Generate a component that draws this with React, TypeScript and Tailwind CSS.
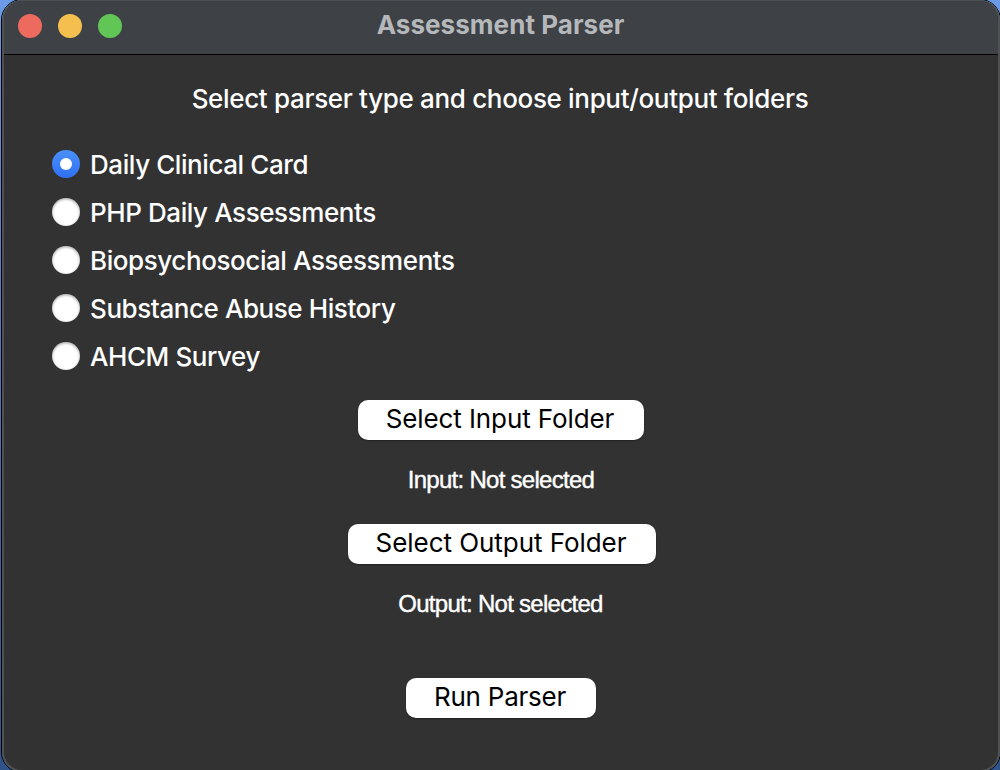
import { useState } from "react";

const parsers = [
  "Daily Clinical Card",
  "PHP Daily Assessments",
  "Biopsychosocial Assessments",
  "Substance Abuse History",
  "AHCM Survey",
];

function TitleBar() {
  return (
    <header className="grid h-[54px] shrink-0 grid-cols-[1fr_auto_1fr] items-center border-b border-black bg-[#3e4145]">
      <div className="flex gap-4 pb-[3px] pl-[14px]">
        <span className="size-6 rounded-full bg-[#ed6a5f]" />
        <span className="size-6 rounded-full bg-[#f5bf50]" />
        <span className="size-6 rounded-full bg-[#62c656]" />
      </div>
      <h1 className="pr-px pb-[5px] text-[26px] leading-8 font-bold tracking-[0.05px] text-[#b5b8bb]">Assessment Parser</h1>
    </header>
  );
}

function PushButton({ children, className }: { children: string; className: string }) {
  return (
    <button className={`flex h-10 items-center justify-center rounded-[10px] bg-white pb-0.5 text-[26px] leading-8 whitespace-nowrap text-black shadow-[0_1px_2px_rgba(0,0,0,0.35)] ${className}`}>
      {children}
    </button>
  );
}

function Status({ children }: { children: string }) {
  return (
    <p className="font-['Liberation_Sans',Arial,sans-serif] text-[24px] leading-8 tracking-[-0.72px] [-webkit-text-stroke:0.4px_white]">
      {children}
    </p>
  );
}

export default function App() {
  const [selected, setSelected] = useState(0);
  return (
    <div className="flex h-[770px] w-[1000px] overflow-hidden bg-linear-to-b from-[#6b9ae6] via-[#4a78c4] to-[#2f5288] pl-px font-[Inter,sans-serif] text-white">
      <div className="-mt-px h-[774px] w-[1000px] shrink-0 rounded-[21px] border border-black">
        <div className="flex h-full flex-col overflow-hidden rounded-[20px] border-2 border-t border-[#505153] border-t-[#4c4f53] bg-[#323232]">
          <TitleBar />
          <main className="flex flex-col items-center pt-[28px]">
            <p className="pr-0.5 text-[26px] leading-8 font-[450] tracking-[-0.33px]">Select parser type and choose input/output folders</p>
            <div className="mt-[26px] flex flex-col self-stretch pl-12">
              {parsers.map((label, i) => (
                <button key={label} onClick={() => setSelected(i)} className="flex h-12 items-center gap-[10px] text-left">
                  <span
                    className={
                      i === selected
                        ? "mb-0.5 flex size-7 items-center justify-center rounded-full bg-linear-to-b from-[#4a90fa] to-[#2f70f2]"
                        : "mb-0.5 flex size-7 items-center justify-center rounded-full bg-white shadow-[inset_0_1px_3px_rgba(0,0,0,0.4)]"
                    }
                  >
                    {i === selected && <span className="size-3 rounded-full bg-white" />}
                  </span>
                  <span className="text-[26px] leading-8 font-[450] tracking-[-0.42px]">{label}</span>
                </button>
              ))}
            </div>
            <div className="mt-[19px] flex flex-col items-center">
              <PushButton className="w-[286px] pr-0.5 tracking-[-0.1px]">Select Input Folder</PushButton>
              <div className="pt-6 pb-7">
                <Status>Input: Not selected</Status>
              </div>
              <PushButton className="ml-0.5 w-[308px] pr-0.5 tracking-[-0.05px]">Select Output Folder</PushButton>
              <div className="pt-6 pr-px pb-[58px]">
                <Status>Output: Not selected</Status>
              </div>
              <PushButton className="w-[190px] pr-0.5 tracking-[-0.25px]">Run Parser</PushButton>
            </div>
          </main>
        </div>
      </div>
    </div>
  );
}
